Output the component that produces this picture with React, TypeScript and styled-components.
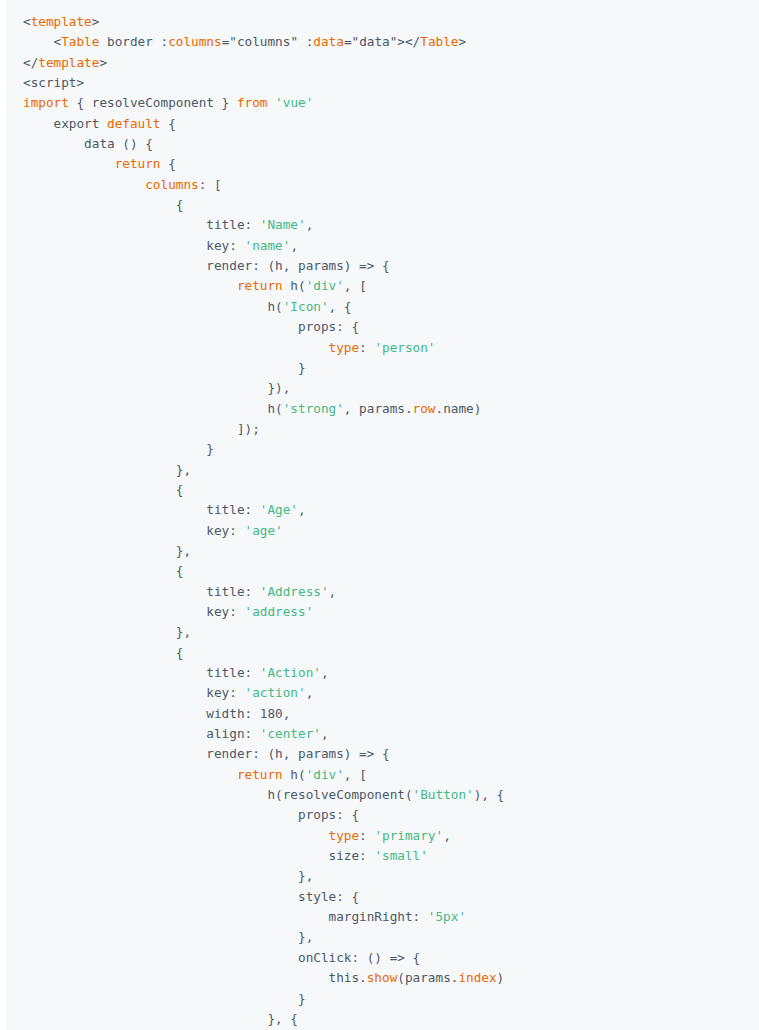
import React from "react";
import styled, { createGlobalStyle } from "styled-components";

const Global = createGlobalStyle`
  html, body { margin: 0; padding: 0; background: #ffffff; }
  #root { width: 759px; height: 1030px; overflow: hidden; }
`;

const Page = styled.div`
  padding-left: 6px;
  height: 1030px;
  box-sizing: border-box;
`;

const CodeBlock = styled.pre`
  margin: 0;
  height: 100%;
  box-sizing: border-box;
  background: #f7f8fa;
  padding: 12px 0 0 17px;
  font-family: "DejaVu Sans Mono", "Liberation Mono", monospace;
  font-size: 12.7px;
  line-height: 20.35px;
  color: #4b5866;
  white-space: pre;
  overflow: hidden;
`;

const Line = styled.div`
  height: 20.35px;
`;

const Tok = styled.span<{ $kind: "k" | "s" | "p" }>`
  color: ${(p) => (p.$kind === "k" ? "#e96900" : p.$kind === "s" ? "#42b983" : "inherit")};
`;

type T = [("k" | "s" | "p"), string];
const I = (n: number) => "    ".repeat(n);
const p = (t: string): T => ["p", t];
const k = (t: string): T => ["k", t];
const s = (t: string): T => ["s", t];

const lines: T[][] = [
  [p("<"), k("template"), p(">")],
  [p(I(1) + "<"), k("Table"), p(" border :"), k("columns"), p('="columns" :'), k("data"), p('="data"></'), k("Table"), p(">")],
  [p("</"), k("template"), p(">")],
  [p("<script>")],
  [k("import"), p(" { resolveComponent } "), k("from"), p(" "), s("'vue'")],
  [p(I(1) + "export "), k("default"), p(" {")],
  [p(I(2) + "data () {")],
  [p(I(3)), k("return"), p(" {")],
  [p(I(4)), k("columns"), p(": [")],
  [p(I(5) + "{")],
  [p(I(6) + "title: "), s("'Name'"), p(",")],
  [p(I(6) + "key: "), s("'name'"), p(",")],
  [p(I(6) + "render: (h, params) => {")],
  [p(I(7)), k("return"), p(" h("), s("'div'"), p(", [")],
  [p(I(8) + "h("), s("'Icon'"), p(", {")],
  [p(I(9) + "props: {")],
  [p(I(10)), k("type"), p(": "), s("'person'")],
  [p(I(9) + "}")],
  [p(I(8) + "}),")],
  [p(I(8) + "h("), s("'strong'"), p(", params."), k("row"), p(".name)")],
  [p(I(7) + "]);")],
  [p(I(6) + "}")],
  [p(I(5) + "},")],
  [p(I(5) + "{")],
  [p(I(6) + "title: "), s("'Age'"), p(",")],
  [p(I(6) + "key: "), s("'age'")],
  [p(I(5) + "},")],
  [p(I(5) + "{")],
  [p(I(6) + "title: "), s("'Address'"), p(",")],
  [p(I(6) + "key: "), s("'address'")],
  [p(I(5) + "},")],
  [p(I(5) + "{")],
  [p(I(6) + "title: "), s("'Action'"), p(",")],
  [p(I(6) + "key: "), s("'action'"), p(",")],
  [p(I(6) + "width: 180,")],
  [p(I(6) + "align: "), s("'center'"), p(",")],
  [p(I(6) + "render: (h, params) => {")],
  [p(I(7)), k("return"), p(" h("), s("'div'"), p(", [")],
  [p(I(8) + "h(resolveComponent("), s("'Button'"), p("), {")],
  [p(I(9) + "props: {")],
  [p(I(10)), k("type"), p(": "), s("'primary'"), p(",")],
  [p(I(10) + "size: "), s("'small'")],
  [p(I(9) + "},")],
  [p(I(9) + "style: {")],
  [p(I(10) + "marginRight: "), s("'5px'")],
  [p(I(9) + "},")],
  [p(I(9) + "onClick: () => {")],
  [p(I(10) + "this."), k("show"), p("(params."), k("index"), p(")")],
  [p(I(9) + "}")],
  [p(I(8) + "}, {")],
];

export default function App() {
  return (
    <>
      <Global />
      <Page>
        <CodeBlock>
          {lines.map((ln, i) => (
            <Line key={i}>
              {ln.map(([kind, text], j) => (
                <Tok key={j} $kind={kind}>
                  {text}
                </Tok>
              ))}
            </Line>
          ))}
        </CodeBlock>
      </Page>
    </>
  );
}
